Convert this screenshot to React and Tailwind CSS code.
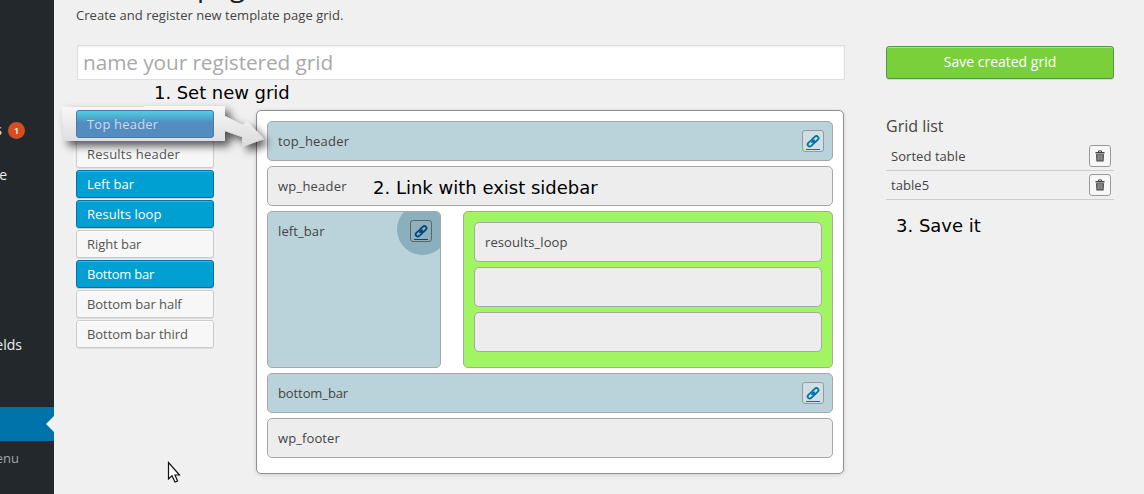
import React from "react";

const elements = [
  ["Top header", true, "tracking-[0.15px]"],
  ["Results header", false, "tracking-[0.22px]"],
  ["Left bar", true, "tracking-normal"],
  ["Results loop", true, "tracking-[0.05px]"],
  ["Right bar", false, "tracking-[-0.05px]"],
  ["Bottom bar", true, "tracking-[-0.2px]"],
  ["Bottom bar half", false, "tracking-[-0.05px]"],
  ["Bottom bar third", false, "tracking-[-0.05px]"],
];

function ChainIcon() {
  return (
    <svg width="14" height="13" viewBox="0 0 14 13" className="block shrink-0" fill="none" stroke="currentColor" strokeWidth="1.8">
      <rect x="-3.6" y="-2.1" width="7.2" height="4.2" rx="2.1" transform="translate(9.3 4.2) rotate(-43)" />
      <rect x="-3.6" y="-2.1" width="7.2" height="4.2" rx="2.1" transform="translate(4.9 8.4) rotate(-43)" />
      <path d="M5.4 7.9L8.8 4.7" strokeWidth="1.3" />
    </svg>
  );
}

function LinkButton({ dark }) {
  return (
    <span className={"relative z-10 flex h-[22px] w-[22px] flex-col items-center rounded-[3px] border pt-[4px] " + (dark ? "border-[#5c6468] bg-[#8fb0bd] text-[#034780]" : "border-[#999] bg-[#cfdfe5] text-[#0074a2]")}>
      <ChainIcon />
      <span className={"mt-px h-px w-[14px] shrink-0 " + (dark ? "bg-[#034780]" : "bg-[#0074a2]")} />
    </span>
  );
}

function Block({ label, blue, link, tracking = "tracking-normal" }) {
  return (
    <div className={"flex h-[40px] w-full items-center justify-between rounded-[5px] border border-[#a7a7a7] pl-[10px] pr-[8px] text-[13px] text-[#444] " + (blue ? "bg-[#bad3da]" : "bg-[#ededed]")}>
      <span className={tracking}>{label}</span>
      {link && <LinkButton />}
    </div>
  );
}

function Trash() {
  return (
    <span className="flex h-[22px] w-[22px] items-center justify-center rounded-[3px] border border-[#999] bg-[#f7f7f7]">
      <svg width="10" height="12" viewBox="0 0 10 12" className="block">
        <path d="M3.5 2V.9h3V2" fill="none" stroke="#444" strokeWidth="1" />
        <path d="M.5 2h9v1.4h-9zM1 4.2h8l-.4 7.3H1.4z" fill="#444" />
        <path d="M3.1 5v5.5M5 5v5.5M6.9 5v5.5" stroke="#d5d5d5" strokeWidth=".8" />
      </svg>
    </span>
  );
}

export default function App() {
  return (
    <div className="relative flex h-[494px] w-[1144px] overflow-hidden bg-[#f0f0f0] font-['Open_Sans',sans-serif] text-[13px] leading-[20px] text-[#444]">
      <aside className="relative w-[54px] shrink-0 bg-[#23282d] text-[14px] text-[#eee]">
        <span className="absolute right-[52px] top-[120px]">s</span>
        <span className="absolute left-[8px] top-[122px] flex h-[17px] w-[17px] items-center justify-center rounded-full bg-[#d54e21] text-[9px] font-semibold leading-none text-white">1</span>
        <span className="absolute right-[47px] top-[165px]">e</span>
        <span className="absolute right-[32px] top-[335px]">fields</span>
        <div className="absolute left-0 top-[407px] h-[34px] w-full bg-[#0073aa]">
          <svg className="absolute right-0 top-[9px]" width="8" height="16"><path d="M8 0v16L0 8z" fill="#f0f0f0" /></svg>
        </div>
        <span className="absolute right-[35px] top-[448px] text-[13px] text-[#a0a5aa]">menu</span>
      </aside>

      <main className="flex flex-1 flex-col pl-[22px]">
        <h1 className="-mt-[29px] h-[34px] shrink-0 text-[28px] font-normal leading-[28px] text-[#222]">Add new page</h1>
        <p className="h-[20px] tracking-[0.03px]">Create and register new template page grid.</p>

        <div className="mt-[20px] flex">
          <section className="w-[768px]">
            <div className="ml-px flex h-[35px] w-[768px] items-center border border-[#ddd] bg-white pb-[2px] pl-[5px] text-[20.8px] tracking-[-0.08px] text-[#a9a9a9] shadow-[inset_0_1px_2px_rgba(0,0,0,0.07)]">name your registered grid</div>
            <div className="mt-[30px] flex">
              <div className="flex w-[180px] flex-col gap-[2px]">
                {elements.map(([name, on, tracking]) => (
                  <div key={name} className={"flex h-[28px] w-[138px] items-center rounded-[3px] border pl-[10px] " + tracking + " " + (name === "Top header" ? "text-transparent " : on ? "text-white " : "text-[#555] ") + (on ? "border-[#0073aa] bg-[#00a0d2] shadow-[inset_0_1px_0_rgba(120,200,230,0.5),0_1px_0_rgba(0,0,0,0.15)]" : "border-[#ccc] bg-[#f7f7f7] shadow-[inset_0_1px_0_#fff,0_1px_0_rgba(0,0,0,0.08)]")}>{name === "Top header" ? null : name}</div>
                ))}
              </div>
              <div className="flex h-[364px] w-[588px] flex-col gap-[5px] rounded-[5px] border border-[#8f8f8f] bg-white p-[10px] shadow-[0_1px_4px_rgba(0,0,0,0.14)]">
                <Block label="top_header" blue link tracking="tracking-[0.2px]" />
                <Block label="wp_header" tracking="tracking-[0.22px]" />
                <div className="flex h-[157px] gap-[22px]">
                  <div className="relative flex w-[174px] items-start justify-between overflow-hidden rounded-[5px] border border-[#a7a7a7] bg-[#bad3da] pl-[10px] pr-[8px] pt-[8px]">
                    <span className="pt-px tracking-[0.1px]">left_bar</span>
                    <span className="absolute right-[-8px] top-[-8px] h-[51px] w-[51px] rounded-full bg-[#8aafbd]" />
                    <LinkButton dark />
                  </div>
                  <div className="flex flex-1 flex-col gap-[5px] rounded-[5px] border border-[#a7a7a7] bg-[#a1f462] p-[10px]">
                    <Block label="resoults_loop" tracking="tracking-[0.1px]" />
                    <Block />
                    <Block />
                  </div>
                </div>
                <Block label="bottom_bar" blue link tracking="tracking-[-0.1px]" />
                <Block label="wp_footer" tracking="tracking-[0.1px]" />
              </div>
            </div>
          </section>

          <section className="ml-[42px] w-[228px]">
            <div className="mt-px flex h-[33px] items-center justify-center rounded-[3px] border border-[#4f9a4a] bg-[#7ad03a] pb-[2px] text-[14px] text-white shadow-[inset_0_1px_0_rgba(190,240,150,0.7),0_1px_0_rgba(0,0,0,0.1)]">Save created grid</div>
            <h2 className="mt-[37px] text-[16px] leading-[20px]">Grid list</h2>
            <div className="mt-[6px] flex flex-col">
              {["Sorted table", "table5"].map((n) => (
                <div key={n} className="flex h-[29px] items-center justify-between border-b border-[#ccc] pl-[5px] pr-[3px]">
                  <span className="tracking-[0.05px]">{n}</span>
                  <Trash />
                </div>
              ))}
            </div>
          </section>
        </div>
      </main>

      <svg className="absolute left-0 top-0" width="300" height="200">
        <defs>
          <filter id="soft" x="-20%" y="-20%" width="150%" height="170%">
            <feDropShadow dx="5" dy="5" stdDeviation="4" floodColor="#000" floodOpacity=".65" />
          </filter>
          <linearGradient id="button" x1="0" y1="0" x2="0" y2="1">
            <stop offset="0" stopColor="#4cd3e6" />
            <stop offset=".45" stopColor="#538cc0" />
            <stop offset="1" stopColor="#538cc0" />
          </linearGradient>
          <linearGradient id="arrow" x1="0" y1="0" x2="0" y2="1">
            <stop offset="0" stopColor="#f8f8f8" />
            <stop offset="1" stopColor="#dadada" />
          </linearGradient>
        </defs>
        <path filter="url(#soft)" fill="url(#arrow)" d="M62 107H144V106H225V116L243 125L247 121L264 139L242 147V137L225 131V141H63V124H62Z" />
        <rect x="76.5" y="110.5" width="137" height="27" rx="2.5" fill="url(#button)" stroke="#4779ae" />
      </svg>
      <span className="absolute left-[87px] top-[114px] tracking-[0.2px] text-[#c9dcec]">Top header</span>

      <span className="absolute left-[154px] top-[83px] whitespace-nowrap font-['DejaVu_Sans',sans-serif] text-[18px] tracking-[-0.05px] text-black">1. Set new grid</span>
      <span className="absolute left-[373px] top-[178px] whitespace-nowrap font-['DejaVu_Sans',sans-serif] text-[18px] text-black">2. Link with exist sidebar</span>
      <span className="absolute left-[896px] top-[216px] whitespace-nowrap font-['DejaVu_Sans',sans-serif] text-[18px] text-black">3. Save it</span>

      <svg className="absolute left-[167px] top-[461px]" width="16" height="24" viewBox="0 0 16 24">
        <path d="M1.5 1.5V18L5 14.8L8 21L10.5 20L8 14H12.5Z" fill="white" stroke="#111" strokeWidth="1.2" />
      </svg>
    </div>
  );
}
